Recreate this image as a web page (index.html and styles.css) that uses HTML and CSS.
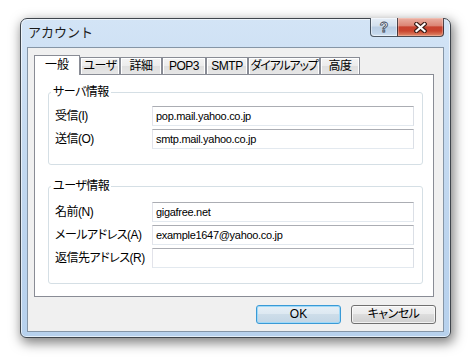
FILE: index.html
```html
<!DOCTYPE html>
<html lang="ja">
<head>
<meta charset="utf-8">
<title>アカウント</title>
<link rel="stylesheet" href="styles.css">
</head>
<body>
<div class="stage">
  <div class="window">
    <div class="titlebar">
      <div class="title">アカウント</div>
      <div class="caption">
        <div class="cap-btn help"><span class="help-glyph">?</span></div>
        <div class="cap-btn close">
          <svg width="13" height="11" viewBox="0 0 13 11" aria-hidden="true">
            <path d="M2.5 2 L10.5 9 M10.5 2 L2.5 9" stroke="#3b1d17" stroke-width="4.4" stroke-linecap="square" fill="none"/>
            <path d="M2.5 2 L10.5 9 M10.5 2 L2.5 9" stroke="#ffffff" stroke-width="2.2" stroke-linecap="square" fill="none"/>
          </svg>
        </div>
      </div>
    </div>
    <div class="client">
      <div class="tabs">
        <div class="tab active t-general">一般</div>
        <div class="tab t-user">ユーザ</div>
        <div class="tab t-detail">詳細</div>
        <div class="tab t-pop">POP3</div>
        <div class="tab t-smtp">SMTP</div>
        <div class="tab t-dial">ダイアルアップ</div>
        <div class="tab t-adv">高度</div>
      </div>
      <div class="panel">
        <fieldset class="group">
          <legend>サーバ情報</legend>
          <div class="row"><span class="label">受信(I)</span><div class="field">pop.mail.yahoo.co.jp</div></div>
          <div class="row"><span class="label">送信(O)</span><div class="field">smtp.mail.yahoo.co.jp</div></div>
        </fieldset>
        <fieldset class="group second">
          <legend>ユーザ情報</legend>
          <div class="row"><span class="label">名前(N)</span><div class="field">gigafree.net</div></div>
          <div class="row"><span class="label">メールアドレス(A)</span><div class="field">example1647@yahoo.co.jp</div></div>
          <div class="row"><span class="label">返信先アドレス(R)</span><div class="field"></div></div>
        </fieldset>
      </div>
      <div class="actions">
        <div class="btn default">OK</div>
        <div class="btn">キャンセル</div>
      </div>
    </div>
  </div>
</div>
</body>
</html>
```

FILE: styles.css
```css
html, body {
  margin: 0;
  padding: 0;
  background: #ffffff;
}

body {
  width: 472px;
  height: 362px;
  overflow: hidden;
  font-family: "Liberation Sans", "Noto Sans CJK JP", sans-serif;
  font-size: 12px;
  color: #000000;
}

.stage {
  padding: 18px 0 0 20px;
}

.window {
  box-sizing: border-box;
  width: 431px;
  height: 320px;
  border: 1px solid #3f454c;
  border-radius: 7px 7px 6px 6px;
  background: linear-gradient(180deg, #d3e4f6 0%, #c6dbf1 35%, #bcd4ee 70%, #b7d1ed 100%);
  box-shadow: 2px 4px 12px 1px rgba(0, 0, 0, 0.5), inset 0 0 0 1px rgba(255, 255, 255, 0.6);
  padding: 0 6px 5px 6px;
  display: flex;
  flex-direction: column;
}

.titlebar {
  height: 28px;
  display: flex;
  justify-content: space-between;
  align-items: flex-start;
}

.title {
  padding: 5px 0 0 1px;
  font-family: "Noto Sans CJK JP", sans-serif;
  font-size: 13px;
  line-height: 16px;
  color: #1b1b1b;
}

.caption {
  display: flex;
  margin-top: -1px;
}

.cap-btn {
  box-sizing: border-box;
  height: 19px;
  border: 1px solid rgba(35, 45, 58, 0.78);
  border-top: none;
  display: flex;
  align-items: center;
  justify-content: center;
}

.help {
  width: 27px;
  border-right: none;
  border-radius: 0 0 0 4px;
  background: linear-gradient(180deg, #e6eef7 0%, #d2dfed 45%, #b9cde3 50%, #c4d7ec 85%, #d6e5f4 100%);
  box-shadow: inset 0 0 0 1px rgba(255, 255, 255, 0.45);
}

.help-glyph {
  font-family: "Liberation Sans", sans-serif;
  font-weight: bold;
  font-size: 14px;
  line-height: 14px;
  color: #f4f7fb;
  -webkit-text-stroke: 0.8px #3a4656;
}

.close {
  width: 47px;
  border-radius: 0 0 4px 0;
  background: linear-gradient(180deg, #eab0a3 0%, #dc8676 42%, #c84330 50%, #c9452f 72%, #e08b6c 100%);
  box-shadow: inset 0 0 0 1px rgba(255, 220, 210, 0.35);
}

.close svg {
  display: block;
}

.client {
  flex: 1;
  background: #f0f0f0;
  border: 1px solid #8595a6;
  display: flex;
  flex-direction: column;
}

.tabs {
  display: flex;
  align-items: flex-end;
  height: 19px;
  margin: 7px 0 0 6px;
}

.tab {
  box-sizing: border-box;
  height: 17px;
  border: 1px solid #898c95;
  border-bottom: none;
  background: linear-gradient(180deg, #f4f4f4 0%, #ececec 50%, #dfdfdf 50%, #e6e6e6 100%);
  box-shadow: inset 1px 1px 0 #ffffff, inset -1px 0 0 #ffffff;
  display: flex;
  justify-content: center;
  line-height: 16px;
  font-feature-settings: "palt" 1;
  letter-spacing: -0.5px;
  white-space: nowrap;
}

.tab.active {
  height: 20px;
  margin-bottom: -1px;
  position: relative;
  z-index: 1;
  background: #ffffff;
  box-shadow: none;
  line-height: 18px;
  letter-spacing: 0;
}

.t-general { width: 46px; }
.t-user { width: 40px; }
.t-detail { width: 42px; }
.t-pop { width: 44px; }
.t-smtp { width: 42px; }
.t-dial { width: 72px; letter-spacing: -1.2px; }
.t-adv { width: 40px; }

.panel {
  box-sizing: border-box;
  width: 400px;
  height: 223px;
  margin-left: 6px;
  border: 1px solid #898c95;
  background: #ffffff;
  padding-top: 11px;
}

.group {
  margin: 0 10px 0 13px;
  padding: 8px 7px 15px 2px;
  border: 1px solid #d5dfe5;
  border-radius: 3px;
  min-width: 0;
}

.group.second {
  margin-top: 15px;
  padding-top: 10px;
}

.group legend {
  padding: 0 2px;
  font-size: 12px;
  line-height: 12px;
  font-feature-settings: "palt" 1;
  letter-spacing: -0.5px;
}

.row {
  display: grid;
  grid-template-columns: 97px 262px;
  align-items: center;
  height: 20px;
  padding-left: 4px;
}

.row + .row {
  margin-top: 3px;
}

.label {
  font-size: 12px;
  line-height: 14px;
  font-feature-settings: "palt" 1;
  letter-spacing: -0.5px;
  white-space: nowrap;
}

.field {
  box-sizing: border-box;
  height: 20px;
  border: 1px solid;
  border-color: #abadb3 #dbdfe6 #e3e9ef #e2e3ea;
  background: #ffffff;
  padding-left: 3px;
  font-size: 11px;
  line-height: 18px;
  letter-spacing: -0.3px;
  white-space: nowrap;
}

.actions {
  display: flex;
  justify-content: flex-end;
  gap: 10px;
  margin: 8px 7px 0 0;
}

.btn {
  box-sizing: border-box;
  width: 85px;
  height: 19px;
  border: 1px solid #707070;
  border-radius: 3px;
  background: linear-gradient(180deg, #f2f2f2 0%, #ebebeb 50%, #dddddd 50%, #cfcfcf 100%);
  box-shadow: inset 0 0 0 1px rgba(255, 255, 255, 0.7);
  text-align: center;
  line-height: 17px;
  font-feature-settings: "palt" 1;
  letter-spacing: -0.5px;
}

.btn.default {
  border-color: #3a9ad6;
  background: linear-gradient(180deg, #e6eff6 0%, #dce8f1 50%, #cddde9 50%, #c3d6e5 100%);
  box-shadow: inset 0 0 0 1px #9fd9f8;
  letter-spacing: 0;
}
```
